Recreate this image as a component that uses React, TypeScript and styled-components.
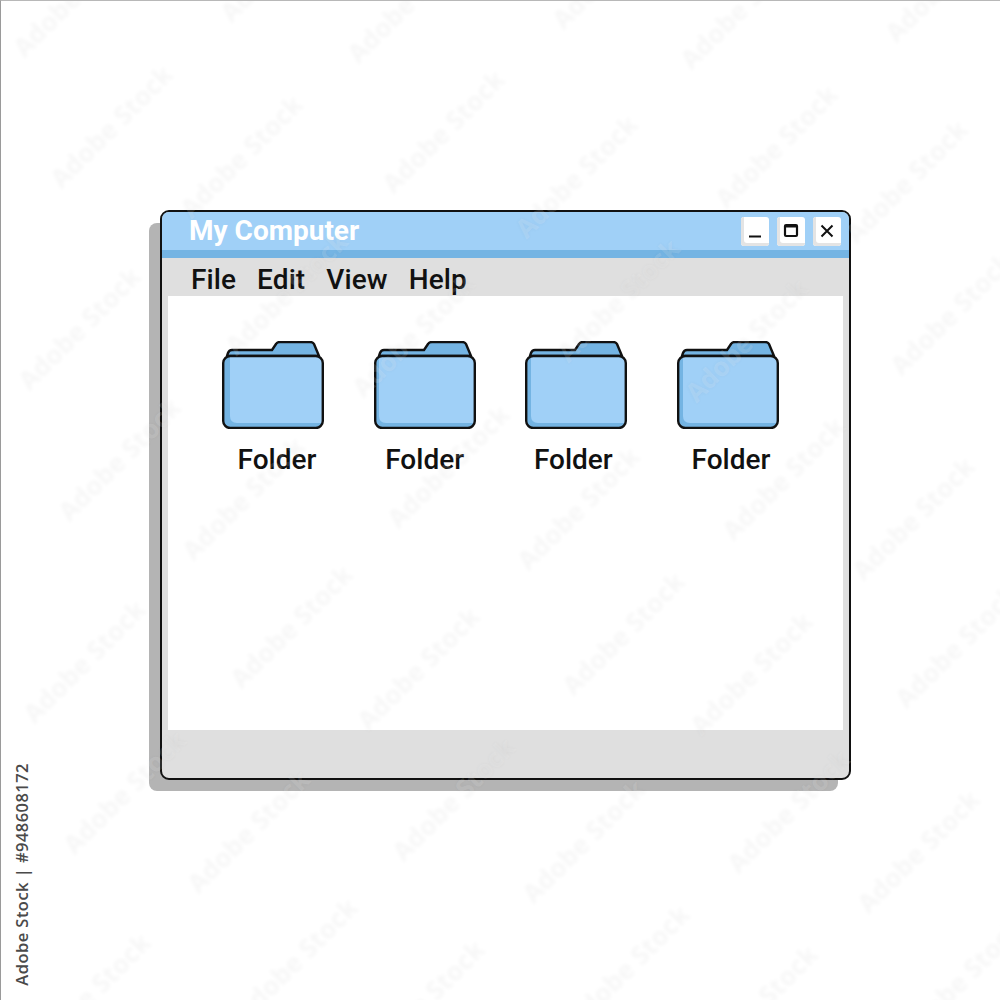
import { createGlobalStyle } from 'styled-components';
import styled from 'styled-components';

const GlobalStyle = createGlobalStyle`
	html, body {
		margin: 0;
		padding: 0;
		background: #ffffff;
	}
`;

const Page = styled.div`
	position: relative;
	box-sizing: border-box;
	width: 1000px;
	height: 1000px;
	padding: 209px 0 0 159px;
	background: #ffffff;
	border-left: 1px solid #9a9a9a;
	border-top: 1px solid #b8b8b8;
	overflow: hidden;
`;

const Window = styled.div`
	box-sizing: border-box;
	display: flex;
	flex-direction: column;
	width: 691px;
	height: 570px;
	border: 2px solid #111111;
	border-radius: 9px;
	background: #dfdfdf;
	box-shadow: -12px 12px 0 -1px #b4b4b4;
	overflow: hidden;
`;

const TitleBar = styled.div`
	box-sizing: border-box;
	display: flex;
	align-items: center;
	justify-content: space-between;
	height: 46px;
	padding: 0 8px 0 27px;
	background: #a0d0f7;
	border-bottom: 8px solid #74b4e3;
`;

const Title = styled.div`
	font-family: Roboto, sans-serif;
	font-weight: 700;
	font-size: 28px;
	line-height: 38px;
	color: #ffffff;
`;

const Controls = styled.div`
	display: flex;
	gap: 8px;
`;

const ControlButton = styled.div`
	box-sizing: border-box;
	display: flex;
	align-items: center;
	justify-content: center;
	width: 28px;
	height: 29px;
	background: #ffffff;
	border-radius: 3px;
	box-shadow: inset 3px -3px 0 #e4e4e4;
`;

const MenuBar = styled.div`
	display: flex;
	align-items: center;
	gap: 21px;
	height: 38px;
	padding: 4px 0 0 29px;
	box-sizing: border-box;
	font-family: Roboto, sans-serif;
	font-weight: 500;
	font-size: 28px;
	color: #111111;
`;

const MenuItem = styled.span`
	letter-spacing: 0.1px;
`;

const Content = styled.div`
	flex: 1;
	display: flex;
	gap: 49.67px;
	margin: 0 6px;
	padding: 45px 0 0 54px;
	background: #ffffff;
`;

const StatusBar = styled.div`
	height: 48px;
`;

const FolderItem = styled.div`
	display: flex;
	flex-direction: column;
	align-items: center;
	width: 102px;
`;

const FolderLabel = styled.div<{ $shift: number }>`
	margin: 15px 0 0 ${(p) => p.$shift * 2}px;
	font-family: Roboto, sans-serif;
	font-weight: 500;
	font-size: 28px;
	line-height: 32px;
	color: #111111;
`;

const StockId = styled.div`
	position: absolute;
	left: 9px;
	top: 762px;
	writing-mode: vertical-rl;
	transform: rotate(180deg);
	font-family: 'Open Sans', sans-serif;
	font-weight: 600;
	font-size: 16.5px;
	letter-spacing: 0.45px;
	color: #4a4a4a;
`;

const Watermark = styled.div`
	position: absolute;
	transform: translate(-50%, -50%) rotate(-45deg);
	font-family: 'Open Sans', sans-serif;
	font-weight: 700;
	font-size: 26px;
	white-space: nowrap;
	color: rgba(255, 255, 255, 0.14);
	text-shadow: 0 0 4px rgba(0, 0, 0, 0.035);
	pointer-events: none;
`;

const folders = [
	{ shade: 7, shift: 4 },
	{ shade: 4, shift: 0 },
	{ shade: 5, shift: -3 },
	{ shade: 5, shift: 3 },
];

// stamp centres of the stock watermark, one column repeats about every 333px down
const stampRows = [
	[[73, -6], [280, -41], [407, 0], [612, -34], [740, 6], [945, -21]],
	[[110, 125], [240, 155], [442, 130], [575, 175], [775, 145], [905, 180]],
	[[78, 327], [285, 292], [412, 334], [617, 299], [745, 339], [950, 312]],
	[[118, 458], [242, 497], [447, 465], [577, 507], [782, 477], [912, 517]],
	[[83, 660], [290, 625], [417, 667], [622, 632], [750, 672], [955, 645]],
	[[123, 791], [247, 830], [452, 798], [582, 840], [787, 810], [917, 850]],
	[[88, 993], [295, 958], [422, 1000], [627, 965], [755, 1005], [960, 978]],
];

const FolderIcon = ({ shade }: { shade: number }) => (
	<svg width="102" height="88" viewBox="0 0 102 88">
		<path
			d="M5 15 L6 12 Q7 9 10 9 L50 9 L54 3 Q55 1 58 1 L88 1 Q91 1 92 3 L97 15 Z"
			fill="#74b4e3"
			stroke="#111111"
			strokeWidth="2.4"
			strokeLinejoin="round"
		/>
		<rect x="1.2" y="15" width="99.6" height="72" rx="7" fill="#74b4e3" />
		<path
			d={`M${1 + shade} 15 L94 15 Q101 15 101 22 L101 82 L${8 + shade} 82 Q${1 + shade} 82 ${1 + shade} 75 Z`}
			fill="#a0d0f7"
		/>
		<rect x="1.2" y="15" width="99.6" height="72" rx="7" fill="none" stroke="#111111" strokeWidth="2.4" />
	</svg>
);

const App = () => (
	<Page>
		<GlobalStyle />
		<Window>
			<TitleBar>
				<Title>My Computer</Title>
				<Controls>
					<ControlButton>
						<svg width="14" height="14" viewBox="0 0 14 14">
							<path d="M1 12.5 H13" stroke="#111111" strokeWidth="2" />
						</svg>
					</ControlButton>
					<ControlButton>
						<svg width="16" height="16" viewBox="0 0 16 16">
							<rect x="2" y="2" width="12" height="11" rx="1" fill="none" stroke="#111111" strokeWidth="2.2" />
							<path d="M2 3.4 H14" stroke="#111111" strokeWidth="2.2" />
						</svg>
					</ControlButton>
					<ControlButton>
						<svg width="14" height="14" viewBox="0 0 14 14">
							<path d="M1.5 1.5 L12.5 12.5 M12.5 1.5 L1.5 12.5" stroke="#111111" strokeWidth="2" />
						</svg>
					</ControlButton>
				</Controls>
			</TitleBar>
			<MenuBar>
				<MenuItem>File</MenuItem>
				<MenuItem>Edit</MenuItem>
				<MenuItem>View</MenuItem>
				<MenuItem>Help</MenuItem>
			</MenuBar>
			<Content>
				{folders.map((folder, i) => (
					<FolderItem key={i}>
						<FolderIcon shade={folder.shade} />
						<FolderLabel $shift={folder.shift}>Folder</FolderLabel>
					</FolderItem>
				))}
			</Content>
			<StatusBar />
		</Window>
		{stampRows.flat().map(([x, y], i) => (
			<Watermark key={i} style={{ left: x, top: y }}>
				Adobe Stock
			</Watermark>
		))}
		<StockId>Adobe Stock | #948608172</StockId>
	</Page>
);

export default App;
